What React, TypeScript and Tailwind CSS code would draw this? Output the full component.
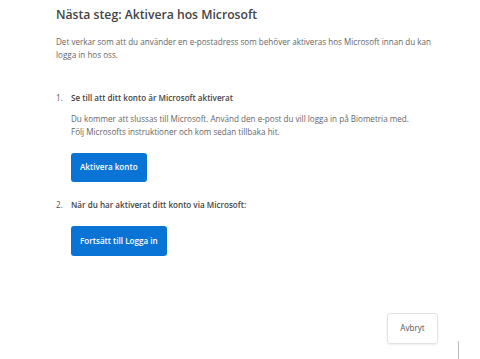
import React from 'react';

const steps = [
  { n: '1.', title: 'Se till att ditt konto är Microsoft aktiverat' },
  { n: '2.', title: 'När du har aktiverat ditt konto via Microsoft:' },
];

const App: React.FC = () => {
  return (
    <div className="w-[480px] h-[359px] bg-white overflow-hidden relative font-['Open_Sans',sans-serif] text-[#555]">
      <div className="pl-[56px] pr-[40px] pt-[5px]">
        <h1 className="text-[12.2px] font-semibold text-[#444] leading-[20px]">Nästa steg: Aktivera hos Microsoft</h1>
        <p className="mt-[10px] text-[8.1px] leading-[13px] text-[#666]">
          Det verkar som att du använder en e-postadress som behöver aktiveras hos Microsoft innan du kan logga in hos oss.
        </p>

        <ol className="mt-[30px] text-[8.1px]">
          <li className="flex">
            <span className="w-[15px] shrink-0 text-[#555] leading-[13px]">{steps[0].n}</span>
            <div>
              <p className="font-semibold text-[#444] leading-[13px]">{steps[0].title}</p>
              <p className="mt-[8px] leading-[13px] text-[#666]">
                Du kommer att slussas till Microsoft. Använd den e-post du vill logga in på Biometria med.
                <br />
                Följ Microsofts instruktioner och kom sedan tillbaka hit.
              </p>
              <button className="mt-[15px] h-[29px] px-[9px] rounded-[3px] bg-[#0a74d6] text-white font-semibold text-[8.1px]">
                Aktivera konto
              </button>
            </div>
          </li>
          <li className="flex mt-[16px]">
            <span className="w-[15px] shrink-0 text-[#555] leading-[13px]">{steps[1].n}</span>
            <div>
              <p className="font-semibold text-[#444] leading-[13px]">{steps[1].title}</p>
              <button className="mt-[15px] h-[30px] px-[9px] rounded-[3px] bg-[#0a74d6] text-white font-semibold text-[8.1px]">
                Fortsätt till Logga in
              </button>
            </div>
          </li>
        </ol>
      </div>

      <div className="absolute left-[387px] top-[313px] w-[51px] h-[31px] rounded-[3px] border border-[#e2e2e2] shadow-[0_1px_2px_rgba(0,0,0,0.08)] flex items-center justify-center text-[8.1px] text-[#555]">
        Avbryt
      </div>
      <div className="absolute left-[458px] top-[341px] w-px h-[18px] bg-[#bbb]" />
    </div>
  );
};

export default App;
